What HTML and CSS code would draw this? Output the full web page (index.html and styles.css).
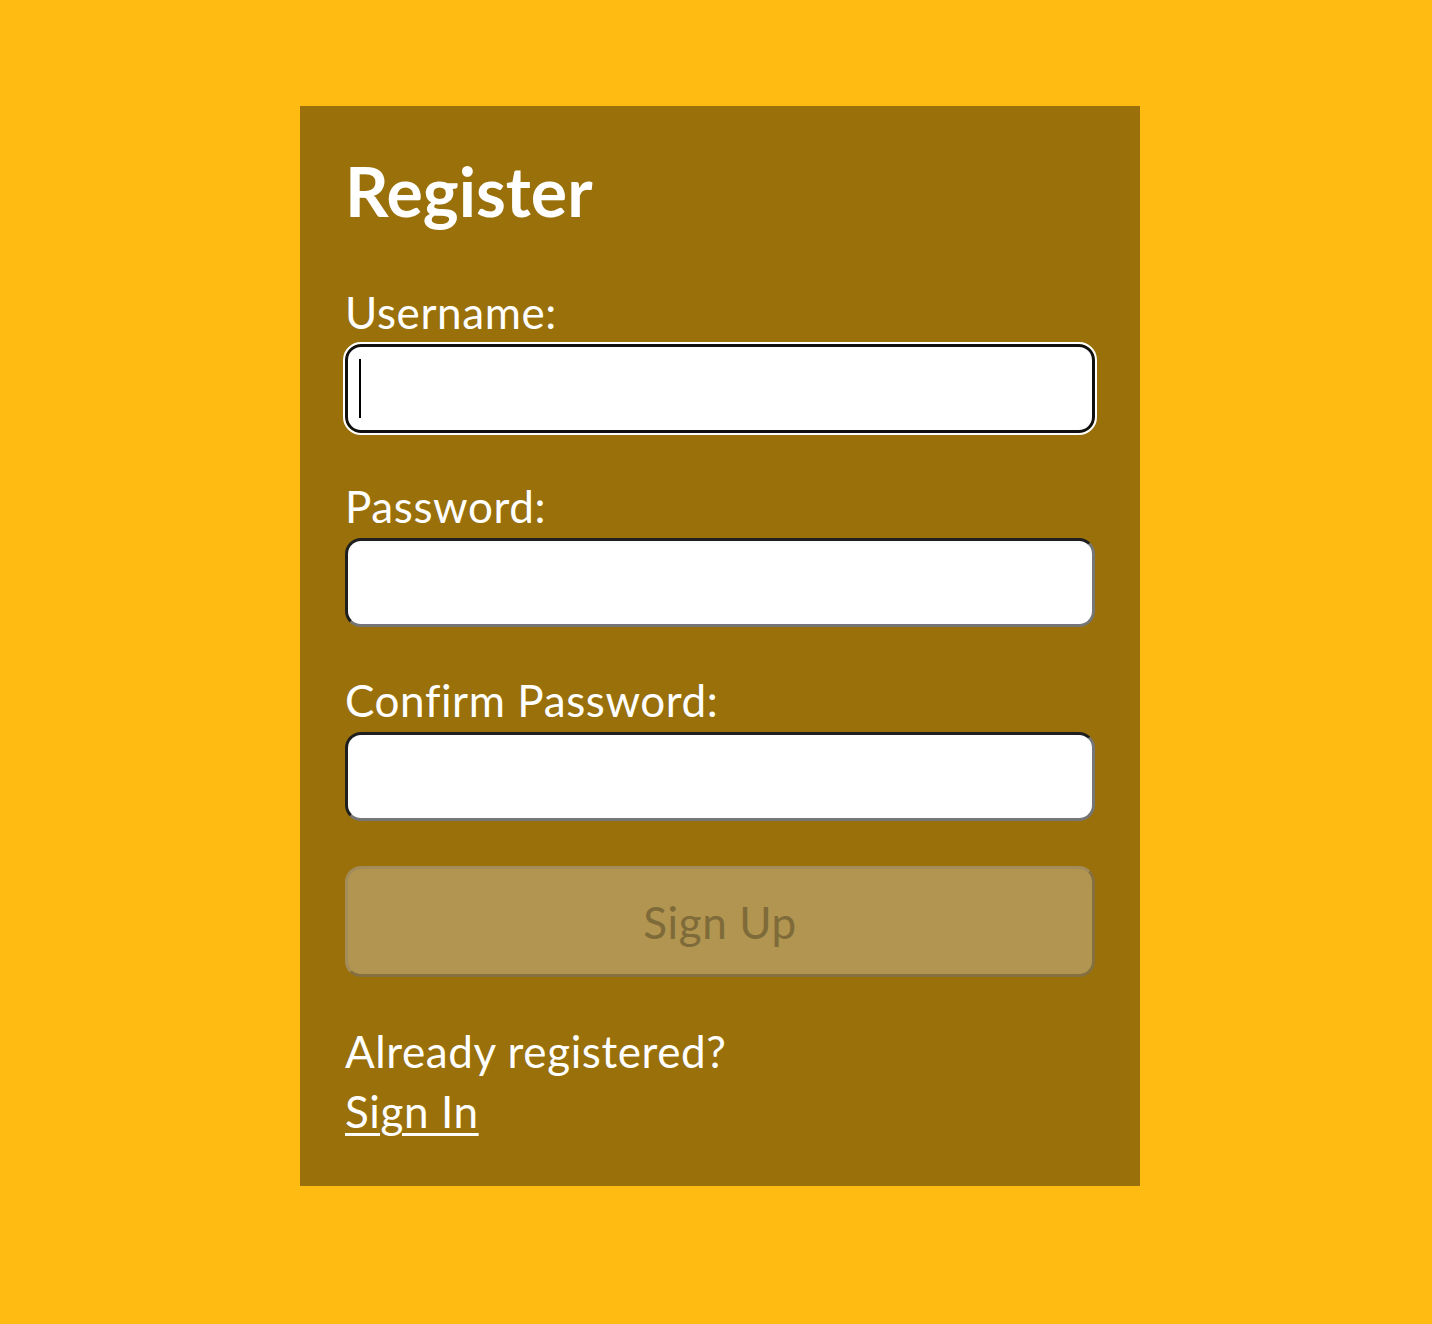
FILE: index.html
```html
<!DOCTYPE html>
<html lang="en">
<head>
<meta charset="utf-8">
<title>Register</title>
<link rel="stylesheet" href="styles.css">
</head>
<body>
<div class="page">
  <section class="card">
    <h1 class="title">Register</h1>
    <form class="form">
      <label class="label" for="username">Username:</label>
      <div class="field">
        <input type="text" id="username" class="input input-focus" autocomplete="off">
        <span class="caret"></span>
      </div>
      <label class="label" for="password">Password:</label>
      <input type="password" id="password" class="input">
      <label class="label" for="confirm">Confirm Password:</label>
      <input type="password" id="confirm" class="input">
      <button type="button" class="btn" disabled>Sign Up</button>
    </form>
    <p class="note">Already registered?<br><a class="link" href="#">Sign In</a></p>
  </section>
</div>
</body>
</html>
```

FILE: styles.css
```css
html, body {
  margin: 0;
  padding: 0;
}

body {
  background: #ffbb11;
  font-family: "Lato", "Nunito", "Noto Sans", sans-serif;
  color: #ffffff;
  font-size: 44px;
  letter-spacing: 0.6px;
  min-height: 1324px;
}

.page {
  display: flex;
  justify-content: center;
  align-items: flex-start;
  padding: 106px 0 0 8px;
}

.card {
  box-sizing: border-box;
  width: 840px;
  padding: 45px 45px 45px 45px;
  background: rgba(0, 0, 0, 0.4);
  display: flex;
  flex-direction: column;
}

.title {
  margin: 0 0 53px 0;
  font-size: 68px;
  line-height: 80px;
  font-weight: 700;
  letter-spacing: 0;
}

.form {
  display: flex;
  flex-direction: column;
  margin: 0;
}

.label {
  display: block;
  box-sizing: border-box;
  line-height: 56px;
  height: 60px;
  padding-bottom: 4px;
  margin-top: 45px;
}

.label:first-child {
  margin-top: 0;
}

.field {
  position: relative;
}

.input {
  display: block;
  box-sizing: border-box;
  width: 100%;
  height: 89px;
  margin: 0;
  padding: 4px 8px;
  font-family: inherit;
  font-size: 44px;
  background: #ffffff;
  border: 3px solid;
  border-color: #1f1f1f #767676 #767676 #1f1f1f;
  border-radius: 16px;
  outline: none;
}

.input-focus {
  border-color: #101010;
  outline: 2px solid #ffffff;
  outline-offset: 0;
  caret-color: transparent;
}

.caret {
  position: absolute;
  left: 14px;
  top: 15px;
  width: 2px;
  height: 59px;
  background: #000000;
}

.btn {
  box-sizing: border-box;
  width: 100%;
  height: 111px;
  margin: 45px 0 0 0;
  padding: 8px;
  font-family: inherit;
  font-size: 44px;
  letter-spacing: 0.6px;
  color: #7e6b39;
  background: #b19550;
  border: 3px solid;
  border-color: #a48b5a #86703f #86703f #a48b5a;
  border-radius: 16px;
}

.note {
  margin: 44px 0 0 0;
  line-height: 60px;
}

.link {
  color: #ffffff;
  text-decoration: underline;
  text-decoration-thickness: 3px;
  text-underline-offset: 5px;
}
```
